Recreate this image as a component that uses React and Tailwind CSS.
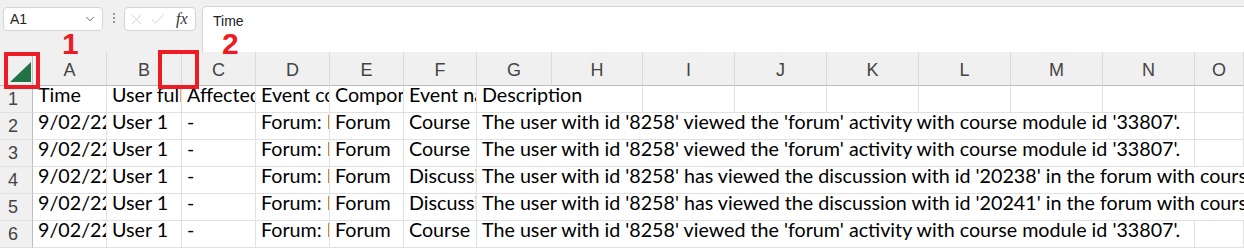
import { ChevronDown, X, Check } from 'lucide-react';

const cols = ['A', 'B', 'C', 'D', 'E', 'F', 'G', 'H', 'I', 'J', 'K', 'L', 'M', 'N', 'O'];

const rows = [
  { time: '9/02/22, 10:14', event: 'Course module viewed', desc: "The user with id '8258' viewed the 'forum' activity with course module id '33807'.", wide: false },
  { time: '9/02/22, 10:13', event: 'Course module viewed', desc: "The user with id '8258' viewed the 'forum' activity with course module id '33807'.", wide: false },
  { time: '9/02/22, 10:12', event: 'Discussion viewed', desc: "The user with id '8258' has viewed the discussion with id '20238' in the forum with course module id '33807'.", wide: true },
  { time: '9/02/22, 10:11', event: 'Discussion viewed', desc: "The user with id '8258' has viewed the discussion with id '20241' in the forum with course module id '33807'.", wide: true },
  { time: '9/02/22, 10:10', event: 'Course module viewed', desc: "The user with id '8258' viewed the 'forum' activity with course module id '33807'.", wide: false },
];

function Cell({ children, className = '' }) {
  return (
    <div className={`h-[27px] border-r border-b border-[#e1e1e1] overflow-hidden whitespace-nowrap flex items-end pl-[5px] pb-[2px] text-black ${className}`}>
      {children}
    </div>
  );
}

function RowHead({ n }) {
  return (
    <div className="h-[27px] bg-[#f0f0f0] border-r border-r-[#bdbdbd] border-b border-b-[#e1e1e1] flex items-center pl-[8px] text-[18px] text-[#444] font-['Liberation_Sans',sans-serif]">
      {n}
    </div>
  );
}

export default function App() {
  return (
    <div className="relative w-[1244px] h-[251px] overflow-hidden bg-white">
      {/* toolbar */}
      <div className="h-[52px] bg-[#f0f0f0] flex items-start font-['Liberation_Sans',sans-serif] text-[14px] text-[#222]">
        <div className="mt-[7px] ml-[3px] w-[100px] h-[24px] bg-white border border-[#d4d4d4] rounded-[4px] flex items-center justify-between pl-[6px] pr-[5px]">
          <span>A1</span>
          <ChevronDown size={14} strokeWidth={1.5} className="text-[#555]" />
        </div>
        <div className="mt-[13px] ml-[9px] w-[4px] flex flex-col items-center gap-[2px]">
          <span className="w-[2px] h-[2px] bg-[#999]" />
          <span className="w-[2px] h-[2px] bg-[#999]" />
          <span className="w-[2px] h-[2px] bg-[#999]" />
        </div>
        <div className="mt-[7px] ml-[8px] w-[72px] h-[24px] bg-white border border-[#d4d4d4] rounded-[4px] flex items-center pl-[3px] gap-[4px]">
          <X size={17} strokeWidth={1.1} className="text-[#c4c4c4]" />
          <Check size={17} strokeWidth={1.1} className="text-[#c4c4c4]" />
          <span className="ml-[6px] text-[16px] italic font-['Liberation_Serif',serif] text-[#333]">fx</span>
        </div>
        <div className="mt-[6px] ml-[6px] flex-1 h-[46px] bg-white border border-[#d4d4d4] border-r-0 border-b-0 rounded-tl-[5px] pl-[10px] pt-[4px]">
          Time
        </div>
      </div>

      {/* sheet */}
      <div className="grid grid-cols-[33px_74px_75px_74px_74px_74px_73px_75px_91px_92px_92px_92px_92px_92px_92px_49px] font-['Lato',sans-serif] text-[19.7px]">
        <div className="h-[34px] bg-[#f0f0f0] border-r border-b border-[#bdbdbd] relative">
          <svg width="33" height="34" viewBox="0 0 33 34" className="absolute left-0 top-0">
            <polygon points="31,10 31,30 10,30" fill="#217346" />
          </svg>
        </div>
        {cols.map((c) => (
          <div
            key={c}
            className="h-[34px] bg-[#f0f0f0] border-r border-r-[#dadada] border-b border-b-[#bdbdbd] flex items-center justify-center pt-[4px] text-[18px] text-[#444] font-['Liberation_Sans',sans-serif]"
          >
            {c}
          </div>
        ))}

        <RowHead n={1} />
        <Cell>Time</Cell>
        <Cell>User full name</Cell>
        <Cell>Affected user</Cell>
        <Cell>Event context</Cell>
        <Cell>Component</Cell>
        <Cell>Event name</Cell>
        <Cell className="col-span-2">Description</Cell>
        {cols.slice(8).map((c) => (
          <Cell key={c} />
        ))}

        {rows.map((r, i) => (
          <div key={i} className="contents">
            <RowHead n={i + 2} />
            <Cell>{r.time}</Cell>
            <Cell>User 1</Cell>
            <Cell>-</Cell>
            <Cell>Forum: Introduction</Cell>
            <Cell>Forum</Cell>
            <Cell>{r.event}</Cell>
            {r.wide ? (
              <Cell className="col-span-9 border-r-0">{r.desc}</Cell>
            ) : (
              <>
                <Cell className="col-span-8">{r.desc}</Cell>
                <Cell />
              </>
            )}
          </div>
        ))}
      </div>

      {/* annotations */}
      <div className="absolute left-[4px] top-[52px] w-[36px] h-[37px] border-[4px] border-[#ed1c24]" />
      <div className="absolute left-[158px] top-[50px] w-[41px] h-[39px] border-[4px] border-[#ed1c24]" />
      <div className="absolute left-[62px] top-[29px] text-[30px] leading-[30px] font-bold text-[#ed1c24] font-['Liberation_Sans',sans-serif]">1</div>
      <div className="absolute left-[222px] top-[29px] text-[30px] leading-[30px] font-bold text-[#ed1c24] font-['Liberation_Sans',sans-serif]">2</div>
    </div>
  );
}
